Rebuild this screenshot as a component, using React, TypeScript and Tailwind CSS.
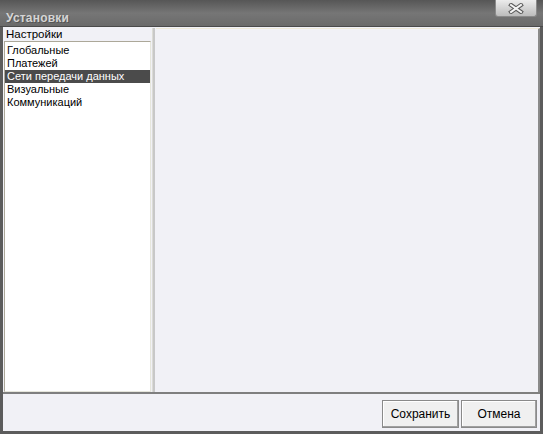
const items = ["Глобальные", "Платежей", "Сети передачи данных", "Визуальные", "Коммуникаций"];
const selected = 2;

const font = { fontFamily: '"Liberation Sans", Arial, sans-serif' };

function CloseGlyph() {
  return (
    <svg width="16" height="11" viewBox="0 0 16 11">
      <path d="M3 2 L13 9 M13 2 L3 9" stroke="#5a5a5a" strokeWidth="4" strokeLinecap="square" />
      <path d="M3 2 L13 9 M13 2 L3 9" stroke="#f4f4f4" strokeWidth="2" strokeLinecap="square" />
    </svg>
  );
}

export default function App() {
  return (
    <div
      className="w-[543px] h-[434px] flex flex-col bg-[#5c5c5c] text-[11px] text-black select-none"
      style={font}
    >
      {/* Title bar */}
      <div className="h-[27px] flex items-start justify-between bg-gradient-to-b from-[#565656] via-[#767676] to-[#6a6a6a] border-b border-[#4a4a4a]">
        <span className="mt-[9px] ml-[6px] text-[12px] font-bold text-[#d4d4d4] tracking-[0.2px] [text-shadow:1px_1px_0_#555]">
          Установки
        </span>
        <button className="w-[42px] h-[17px] mr-[6px] flex items-center justify-center rounded-b-[3px] bg-gradient-to-b from-[#ececec] to-[#bcbcbc] border border-t-0 border-[#8a8a8a]">
          <CloseGlyph />
        </button>
      </div>

      {/* Client */}
      <div className="flex-1 flex flex-col mx-[3px] mb-[3px] bg-[#f1f1f6]">
        <div className="flex-1 flex pt-[1px] border-b-2 border-[#7f7f7f]">
          {/* Left panel */}
          <div className="w-[150px] flex flex-col border-r border-[#dcdcd6]">
            <div className="h-[13px] pl-[3px] leading-[13px] text-[11.5px] bg-[#f1f1f6]">Настройки</div>
            <div className="flex-1 bg-white border border-[#aca899] border-r-[#e6e6dc] border-b-[#e6e6dc] mx-[1px] pt-[2px]">
              {items.map((item, i) => (
                <div
                  key={item}
                  className={
                    i === selected
                      ? "h-[13px] leading-[13px] pl-[2px] text-[11px] bg-[#4b4b4b] text-white"
                      : "h-[13px] leading-[13px] pl-[2px] text-[11px]"
                  }
                >
                  {item}
                </div>
              ))}
            </div>
          </div>
          <div className="w-[2px] bg-[#c8c8c8]" />
          {/* Right panel */}
          <div className="flex-1 ml-[1px] bg-[#f1f1f6] border-t border-[#eee9d8] border-r-2 border-r-[#8a8a8a]" />
        </div>

        {/* Buttons */}
        <div className="h-[37px] flex items-center justify-end gap-[2px] pr-[3px] pt-[2px]">
          <button className="w-[77px] h-[28px] text-[12px] bg-[#f0f0f0] border border-[#8a8a8a] shadow-[inset_-1px_-1px_0_#a0a0a0,inset_1px_1px_0_#fff]">
            Сохранить
          </button>
          <button className="w-[76px] h-[28px] text-[12px] bg-[#f0f0f0] border border-[#8a8a8a] shadow-[inset_-1px_-1px_0_#a0a0a0,inset_1px_1px_0_#fff]">
            Отмена
          </button>
        </div>
      </div>
    </div>
  );
}
